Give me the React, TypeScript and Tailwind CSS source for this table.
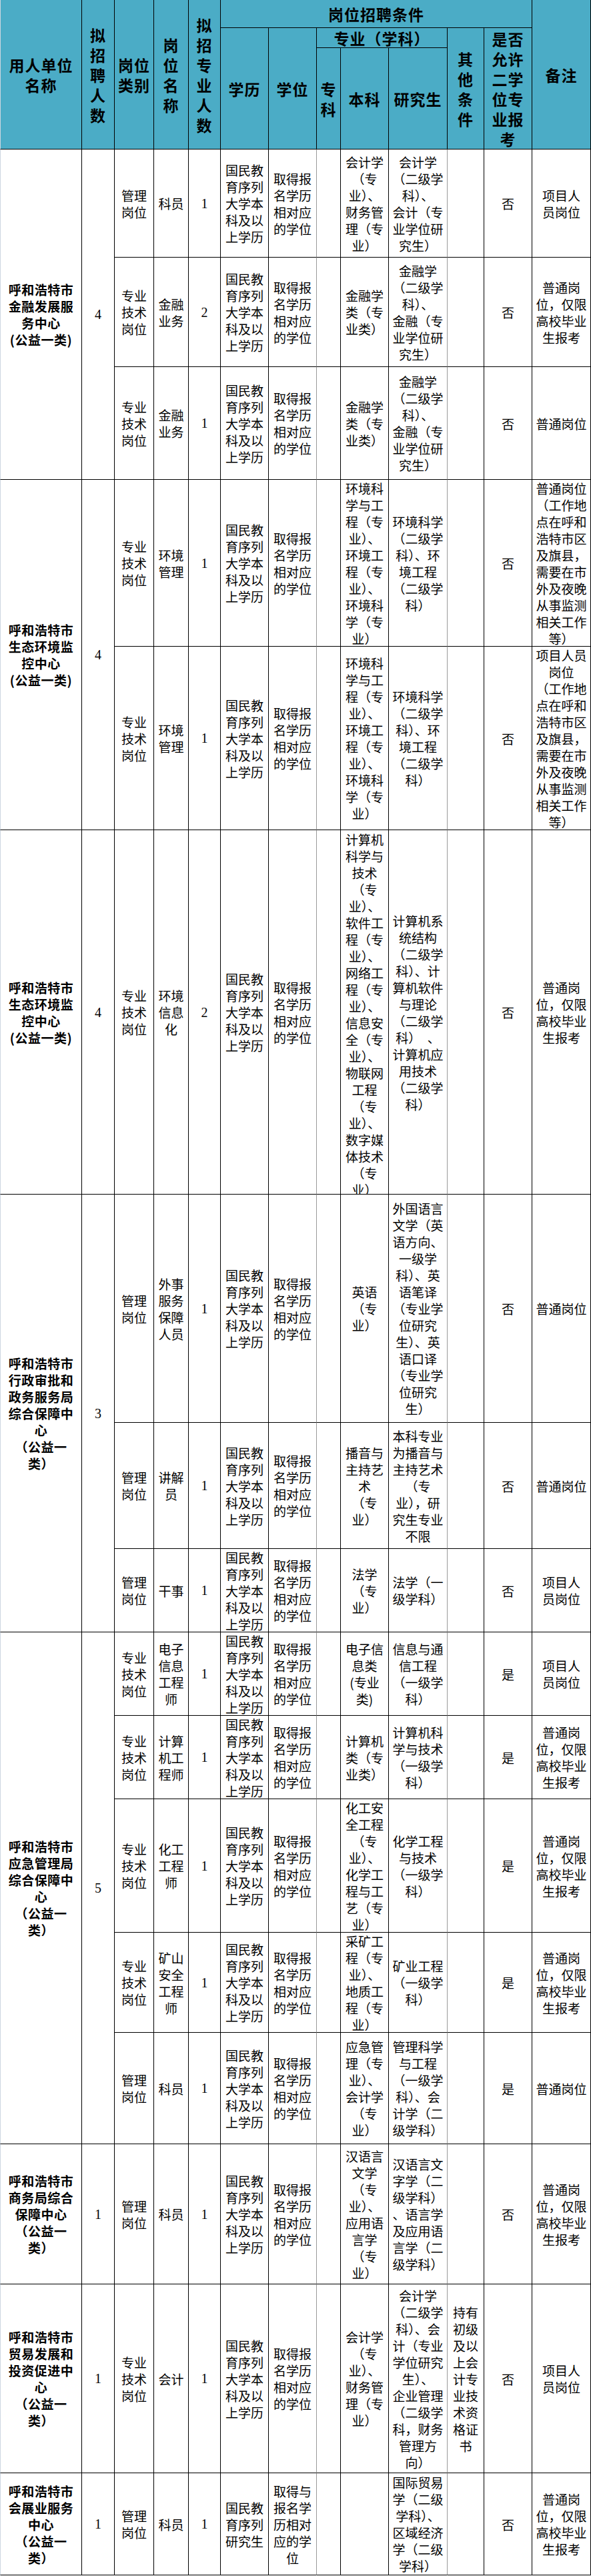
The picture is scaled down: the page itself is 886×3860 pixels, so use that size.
import React from 'react'

type Row = {
  cat: string[]
  pos: string[]
  n: string
  edu?: string[]
  deg?: string[]
  ben: string[]
  yan: string[]
  other?: string[]
  two: string
  note: string[]
  benTop?: boolean
}

type Unit = { name: string[]; count: string; rows: Row[] }

const EDU = ['国民教', '育序列', '大学本', '科及以', '上学历']
const DEG = ['取得报', '名学历', '相对应', '的学位']
const MG = ['管理', '岗位']
const ZY = ['专业', '技术', '岗位']
const PT = ['普通岗', '位，仅限', '高校毕业', '生报考']
const XM = ['项目人', '员岗位']

const ENV_BEN = ['环境科', '学与工', '程（专', '业）、', '环境工', '程（专', '业）、', '环境科', '学（专', '业）']
const ENV_YAN = ['环境科学', '（二级学', '科）、环', '境工程', '（二级学', '科）']
const ENV_NOTE = ['（工作地', '点在呼和', '浩特市区', '及旗县，', '需要在市', '外及夜晚', '从事监测', '相关工作', '等）']

const units: Unit[] = [
  {
    name: ['呼和浩特市', '金融发展服', '务中心', '(公益一类)'],
    count: '4',
    rows: [
      {
        cat: MG, pos: ['科员'], n: '1',
        ben: ['会计学', '（专', '业）、', '财务管', '理（专', '业）'],
        yan: ['会计学', '（二级学', '科）、', '会计（专', '业学位研', '究生）'],
        two: '否', note: XM,
      },
      {
        cat: ZY, pos: ['金融', '业务'], n: '2',
        ben: ['金融学', '类（专', '业类）'],
        yan: ['金融学', '（二级学', '科）、', '金融（专', '业学位研', '究生）'],
        two: '否', note: PT,
      },
      {
        cat: ZY, pos: ['金融', '业务'], n: '1',
        ben: ['金融学', '类（专', '业类）'],
        yan: ['金融学', '（二级学', '科）、', '金融（专', '业学位研', '究生）'],
        two: '否', note: ['普通岗位'],
      },
    ],
  },
  {
    name: ['呼和浩特市', '生态环境监', '控中心', '(公益一类)'],
    count: '4',
    rows: [
      { cat: ZY, pos: ['环境', '管理'], n: '1', ben: ENV_BEN, yan: ENV_YAN, two: '否', note: ['普通岗位', ...ENV_NOTE] },
      { cat: ZY, pos: ['环境', '管理'], n: '1', ben: ENV_BEN, yan: ENV_YAN, two: '否', note: ['项目人员', '岗位', ...ENV_NOTE] },
    ],
  },
  {
    name: ['呼和浩特市', '生态环境监', '控中心', '(公益一类)'],
    count: '4',
    rows: [
      {
        cat: ZY, pos: ['环境', '信息', '化'], n: '2', benTop: true,
        ben: [
          '计算机', '科学与', '技术', '（专', '业）、', '软件工', '程（专', '业）、', '网络工', '程（专', '业）、',
          '信息安', '全（专', '业）、', '物联网', '工程', '（专', '业）、', '数字媒', '体技术', '（专', '业）',
        ],
        yan: [
          '计算机系', '统结构', '（二级学', '科）、计', '算机软件', '与理论', '（二级学', '科）　、', '计算机应',
          '用技术', '（二级学', '科）',
        ],
        two: '否', note: PT,
      },
    ],
  },
  {
    name: ['呼和浩特市', '行政审批和', '政务服务局', '综合保障中', '心', '（公益一', '类）'],
    count: '3',
    rows: [
      {
        cat: MG, pos: ['外事', '服务', '保障', '人员'], n: '1',
        ben: ['英语', '（专', '业）'],
        yan: [
          '外国语言', '文学（英', '语方向、', '一级学', '科）、英', '语笔译', '（专业学', '位研究', '生）、英',
          '语口译', '（专业学', '位研究', '生）',
        ],
        two: '否', note: ['普通岗位'],
      },
      {
        cat: MG, pos: ['讲解', '员'], n: '1',
        ben: ['播音与', '主持艺', '术', '（专', '业）'],
        yan: ['本科专业', '为播音与', '主持艺术', '（专', '业），研', '究生专业', '不限'],
        two: '否', note: ['普通岗位'],
      },
      {
        cat: MG, pos: ['干事'], n: '1',
        ben: ['法学', '（专', '业）'],
        yan: ['法学（一', '级学科）'],
        two: '否', note: XM,
      },
    ],
  },
  {
    name: ['呼和浩特市', '应急管理局', '综合保障中', '心', '（公益一', '类）'],
    count: '5',
    rows: [
      {
        cat: ZY, pos: ['电子', '信息', '工程', '师'], n: '1',
        ben: ['电子信', '息类', '(专业', '类)'],
        yan: ['信息与通', '信工程', '（一级学', '科）'],
        two: '是', note: XM,
      },
      {
        cat: ZY, pos: ['计算', '机工', '程师'], n: '1',
        ben: ['计算机', '类（专', '业类）'],
        yan: ['计算机科', '学与技术', '（一级学', '科）'],
        two: '是', note: PT,
      },
      {
        cat: ZY, pos: ['化工', '工程', '师'], n: '1',
        ben: ['化工安', '全工程', '（专', '业）、', '化学工', '程与工', '艺（专', '业）'],
        yan: ['化学工程', '与技术', '（一级学', '科）'],
        two: '是', note: PT,
      },
      {
        cat: ZY, pos: ['矿山', '安全', '工程', '师'], n: '1',
        ben: ['采矿工', '程（专', '业）、', '地质工', '程（专', '业）'],
        yan: ['矿业工程', '（一级学', '科）'],
        two: '是', note: PT,
      },
      {
        cat: MG, pos: ['科员'], n: '1',
        ben: ['应急管', '理（专', '业）、', '会计学', '（专', '业）'],
        yan: ['管理科学', '与工程', '（一级学', '科）、会', '计学（二', '级学科）'],
        two: '是', note: ['普通岗位'],
      },
    ],
  },
  {
    name: ['呼和浩特市', '商务局综合', '保障中心', '（公益一', '类）'],
    count: '1',
    rows: [
      {
        cat: MG, pos: ['科员'], n: '1',
        ben: ['汉语言', '文学', '（专', '业）、', '应用语', '言学', '（专', '业）'],
        yan: ['汉语言文', '字学（二', '级学科）', '、语言学', '及应用语', '言学（二', '级学科）'],
        two: '否', note: PT,
      },
    ],
  },
  {
    name: ['呼和浩特市', '贸易发展和', '投资促进中', '心', '（公益一', '类）'],
    count: '1',
    rows: [
      {
        cat: ZY, pos: ['会计'], n: '1',
        ben: ['会计学', '（专', '业）、', '财务管', '理（专', '业）'],
        yan: [
          '会计学', '（二级学', '科）、会', '计（专业', '学位研究', '生）、', '企业管理', '（二级学', '科，财务',
          '管理方', '向）',
        ],
        other: ['持有', '初级', '及以', '上会', '计专', '业技', '术资', '格证', '书'],
        two: '否', note: XM,
      },
    ],
  },
  {
    name: ['呼和浩特市', '会展业服务', '中心', '（公益一', '类）'],
    count: '1',
    rows: [
      {
        cat: MG, pos: ['科员'], n: '1',
        edu: ['国民教', '育序列', '研究生'],
        deg: ['取得与', '报名学', '历相对', '应的学', '位'],
        ben: [],
        yan: ['国际贸易', '学（二级', '学科）、', '区域经济', '学（二级', '学科）'],
        two: '否', note: PT,
      },
    ],
  },
]

const SPAN: Record<number, string> = {
  1: 'row-span-1',
  2: 'row-span-2',
  3: 'row-span-3',
  5: 'row-span-5',
}

const cell = 'flex flex-col items-center justify-center text-center border-r border-b border-black'
const head = `${cell} bg-[#4bacc6] font-bold text-[23px] leading-[30px] tracking-[1px] text-black`
const body = `${cell} bg-white text-[19px] leading-[25px] text-black`
const num = `${cell} bg-white font-['Liberation_Serif',serif] text-[20px] text-black`

function Lines({ lines }: { lines: string[] }) {
  return (
    <>
      {lines.map((l, i) => (
        <div key={i} className="whitespace-pre">
          {l}
        </div>
      ))}
    </>
  )
}

function H({ lines, className = '' }: { lines: string[]; className?: string }) {
  return (
    <div className={`${head} ${className}`}>
      <Lines lines={lines} />
    </div>
  )
}

function BodyRow({ row }: { row: Row }) {
  return (
    <>
      <div className={body}><Lines lines={row.cat} /></div>
      <div className={body}><Lines lines={row.pos} /></div>
      <div className={num}>{row.n}</div>
      <div className={body}><Lines lines={row.edu ?? EDU} /></div>
      <div className={`${body} border-r-[#9a9a9a]`}><Lines lines={row.deg ?? DEG} /></div>
      <div className={body} />
      {/* the long list in the IT row is packed a little tighter so it fits the row */}
      <div className={`${body} ${row.benTop ? 'justify-start pt-[1px] leading-[24.6px]' : ''}`}>
        <Lines lines={row.ben} />
      </div>
      <div className={`${body} border-r-[#9a9a9a]`}><Lines lines={row.yan} /></div>
      <div className={body}><Lines lines={row.other ?? []} /></div>
      <div className={body}>{row.two}</div>
      <div className={body}><Lines lines={row.note} /></div>
    </>
  )
}

export default function App() {
  return (
    <div className="w-[886px] bg-white font-['Noto_Sans_CJK_SC','Noto_Sans',sans-serif]">
      <div className="grid grid-cols-[123px_49px_59px_52px_48px_72px_72px_36px_72px_88px_55px_72px_88px] grid-rows-[42px_30px_152px_162px_164px_169px_250px_275px_546px_342px_189px_125px_125px_125px_200px_150px_167px_210px_283px_153px]">
        {/* header */}
        <H lines={['用人单位', '名称']} className="row-span-3 border-l border-l-[#cdd6e0]" />
        <H lines={['拟', '招', '聘', '人', '数']} className="row-span-3" />
        <H lines={['岗位', '类别']} className="row-span-3" />
        <H lines={['岗', '位', '名', '称']} className="row-span-3" />
        <H lines={['拟', '招', '专', '业', '人', '数']} className="row-span-3" />
        <H lines={['岗位招聘条件']} className="col-span-7" />
        <H lines={['备注']} className="row-span-3" />
        <H lines={['学历']} className="row-span-2" />
        <H lines={['学位']} className="row-span-2" />
        <H lines={['专业（学科）']} className="col-span-3" />
        <H lines={['其', '他', '条', '件']} className="row-span-2" />
        <H lines={['是否', '允许', '二学', '位专', '业报', '考']} className="row-span-2" />
        <H lines={['专', '科']} />
        <H lines={['本科']} />
        <H lines={['研究生']} />

        {/* body */}
        {units.map((u, ui) =>
          u.rows.map((r, ri) => (
            <React.Fragment key={`${ui}-${ri}`}>
              {ri === 0 && (
                <>
                  <div
                    className={`${cell} ${SPAN[u.rows.length]} border-l border-l-[#cdd6e0] bg-white font-bold text-[19px] leading-[25px] tracking-[0.5px] text-black`}
                  >
                    <Lines lines={u.name} />
                  </div>
                  <div className={`${num} ${SPAN[u.rows.length]}`}>{u.count}</div>
                </>
              )}
              <BodyRow row={r} />
            </React.Fragment>
          )),
        )}
      </div>
    </div>
  )
}
